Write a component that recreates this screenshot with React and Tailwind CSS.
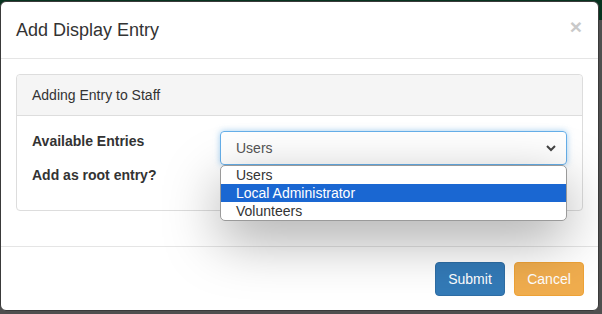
import React from "react";

export default function App() {
  return (
    <div
      className="w-[602px] h-[314px] overflow-hidden bg-[linear-gradient(to_bottom,#07331f_0px,#07331f_20px,#4f4f4f_20px)] pt-[1px] pl-0"
      style={{ fontFamily: '"Liberation Sans", Arial, sans-serif' }}
    >
      <div className="w-[599px] h-[310px] bg-white rounded-[6px] border border-[#3a3a3a] flex flex-col text-[#333]">
        {/* header */}
        <div className="h-[57px] border-b border-[#e5e5e5] flex items-start justify-between px-[15px] pt-[15px]">
          <div className="text-[18px] leading-[26px]">Add Display Entry</div>
          <div className="text-[21px] leading-[21px] font-bold text-[#c9c9c9] mr-[1px] mt-[-1px]">×</div>
        </div>
        {/* body */}
        <div className="px-[15px] pt-[15px] pb-[15px] h-[187px] relative">
          <div className="border border-[#ddd] rounded-[4px] h-[137px] flex flex-col">
            <div className="h-[41px] bg-[#f5f5f5] border-b border-[#ddd] rounded-t-[4px] px-[15px] flex items-center text-[14px] text-[#333]">
              Adding Entry to Staff
            </div>
            <div className="flex flex-col px-[15px] pt-[15px]">
              <div className="flex items-start">
                <div className="w-[189px] text-[14px] leading-[20px] font-bold text-[#333]">Available Entries</div>
                <div className="relative">
                  <div className="w-[347px] h-[34px] border border-[#66afe9] rounded-[4px] shadow-[0_0_6px_rgba(102,175,233,0.6)] flex items-center justify-between pl-[15px] pr-[9px] text-[14px] text-[#555]">
                    <span>Users</span>
                    <svg width="12" height="10" viewBox="0 0 12 10">
                      <polyline points="2,3 6,7 10,3" fill="none" stroke="#444" strokeWidth="2" />
                    </svg>
                  </div>
                  <div className="absolute left-0 top-[34px] w-[347px] bg-white border border-[#9a9a9a] rounded-[5px] overflow-hidden shadow-[0_18px_55px_rgba(0,0,0,0.35)] z-10 text-[14px] leading-[18px]">
                    <div className="pl-[15px] h-[18px] text-[#333]">Users</div>
                    <div className="pl-[15px] h-[18px] bg-[#1a67d2] text-white">Local Administrator</div>
                    <div className="pl-[15px] h-[18px] text-[#333]">Volunteers</div>
                  </div>
                </div>
              </div>
              <div className="text-[14px] leading-[20px] font-bold text-[#333]">Add as root entry?</div>
            </div>
          </div>
        </div>
        {/* footer */}
        <div className="flex-1 border-t border-[#e5e5e5] flex items-start justify-end pt-[15px] pr-[14px] gap-[9px]">
          <button className="w-[70px] h-[34px] rounded-[4px] bg-[#337ab7] border border-[#2e6da4] text-white text-[14px]">Submit</button>
          <button className="w-[70px] h-[34px] rounded-[4px] bg-[#f0ad4e] border border-[#eea236] text-white text-[14px]">Cancel</button>
        </div>
      </div>
    </div>
  );
}
